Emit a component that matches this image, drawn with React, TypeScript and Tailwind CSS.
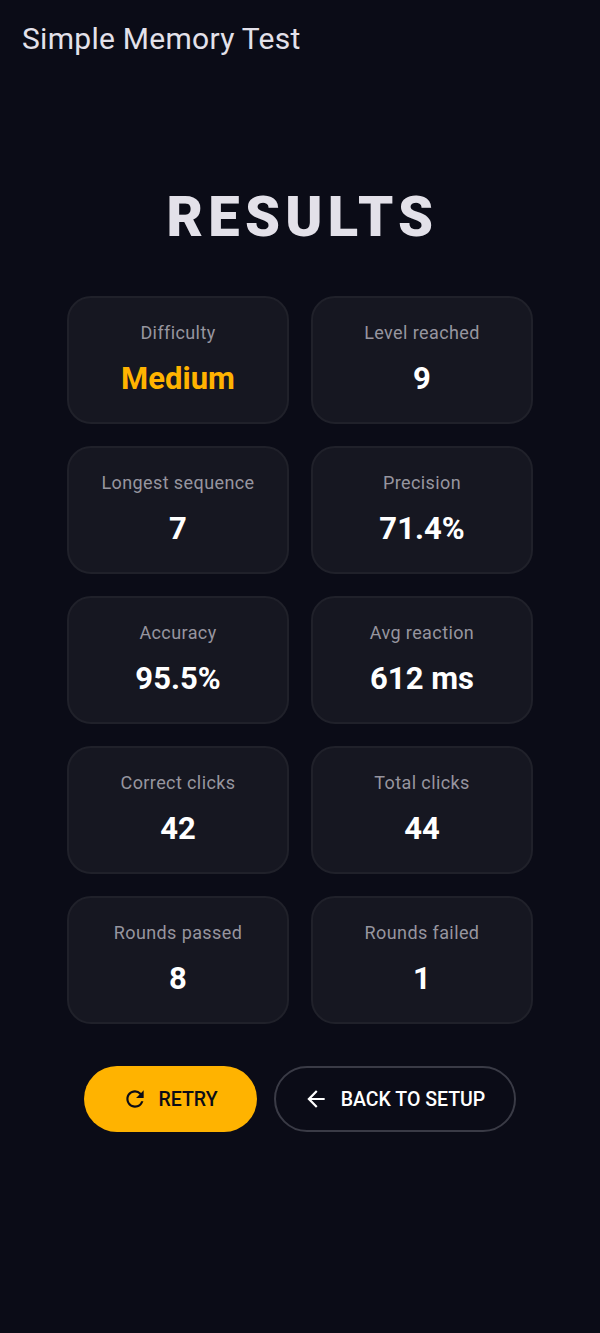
const stats: [string, string, boolean?][] = [
  ["Difficulty", "Medium", true],
  ["Level reached", "9"],
  ["Longest sequence", "7"],
  ["Precision", "71.4%"],
  ["Accuracy", "95.5%"],
  ["Avg reaction", "612 ms"],
  ["Correct clicks", "42"],
  ["Total clicks", "44"],
  ["Rounds passed", "8"],
  ["Rounds failed", "1"],
];

export default function App() {
  return (
    <div className="w-[600px] h-[1333px] bg-[#0b0c17] font-['Roboto',sans-serif] overflow-hidden flex flex-col">
      <header className="h-[78px] pl-[22px] flex items-center">
        <h1 className="text-[30px] leading-[36px] font-normal tracking-[0.28px] text-[#e3e1ea]">Simple Memory Test</h1>
      </header>
      <h2 className="mt-[103px] pl-[5px] text-center text-[56px] leading-[72px] font-black tracking-[5.3px] text-[#e3e1e9]">RESULTS</h2>
      <div className="mt-[43px] mx-auto w-[466px] grid grid-cols-2 gap-[22px]">
        {stats.map(([label, value, accent]) => (
          <div
            key={label}
            className="h-[128px] rounded-[24px] border-2 border-[#20212a] bg-[#161721] flex flex-col items-center pt-[21px]"
          >
            <div className="text-[18px] leading-[28px] tracking-[0.4px] text-[#96959f]">{label}</div>
            <div className={`mt-[12px] text-[31px] leading-[40px] font-bold ${accent ? "text-[#ffb300]" : "text-white"}`}>
              {value}
            </div>
          </div>
        ))}
      </div>
      <div className="mt-[42px] flex justify-center gap-[17px]">
        <button className="w-[173px] h-[66px] rounded-full bg-[#ffb300] text-[#0b0c17] flex items-center justify-center gap-[10px] text-[19.5px] font-medium">
          <svg className="-ml-px" width="26" height="26" viewBox="0 0 24 24" fill="currentColor">
            <path d="M17.65 6.35A7.958 7.958 0 0 0 12 4c-4.42 0-7.99 3.58-7.99 8s3.57 8 7.99 8c3.73 0 6.84-2.55 7.73-6h-2.08A5.99 5.99 0 0 1 12 18c-3.31 0-6-2.69-6-6s2.69-6 6-6c1.66 0 3.14.69 4.22 1.78L13 11h7V4l-2.35 2.35z" />
          </svg>
          <span className="mt-[2px]">RETRY</span>
        </button>
        <button className="w-[242px] h-[66px] rounded-full border-2 border-[#3a3b46] text-white flex items-center justify-center gap-[12px] text-[19.5px] font-medium">
          <svg className="-ml-[2px]" width="26" height="26" viewBox="0 0 24 24" fill="currentColor">
            <path d="M20 11H7.83l5.59-5.59L12 4l-8 8 8 8 1.41-1.41L7.83 13H20v-2z" />
          </svg>
          <span className="mt-[2px]">BACK TO SETUP</span>
        </button>
      </div>
    </div>
  );
}
